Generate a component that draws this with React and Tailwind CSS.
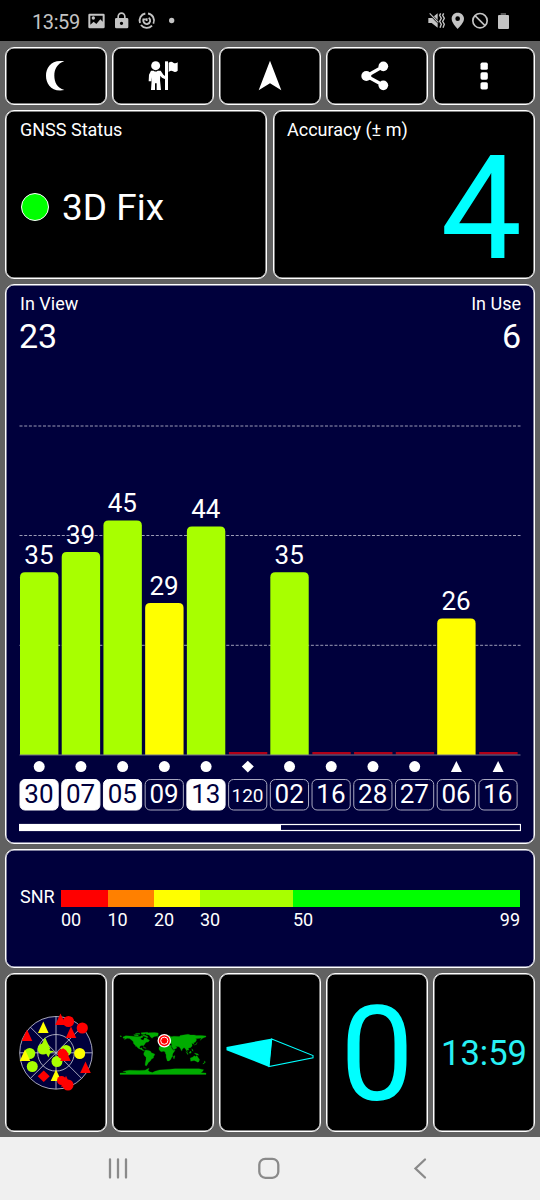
import React from "react";

const PANEL =
  "rounded-[9px] border border-white shadow-[inset_0_0_0_0.5px_#ffffff]";

const SATS = [
  { id: "30", snr: 35, top: 572.2, used: true, shape: "circle" },
  { id: "07", snr: 39, top: 552, used: true, shape: "circle" },
  { id: "05", snr: 45, top: 520.5, used: true, shape: "circle" },
  { id: "09", snr: 29, top: 603, used: false, shape: "circle" },
  { id: "13", snr: 44, top: 526.4, used: true, shape: "circle" },
  { id: "120", snr: 0, used: false, shape: "diamond" },
  { id: "02", snr: 35, top: 572.2, used: false, shape: "circle" },
  { id: "16", snr: 0, used: false, shape: "circle" },
  { id: "28", snr: 0, used: false, shape: "circle" },
  { id: "27", snr: 0, used: false, shape: "circle" },
  { id: "06", snr: 26, top: 618.6, used: false, shape: "triangle" },
  { id: "16", snr: 0, used: false, shape: "triangle" },
];

function StatusBar() {
  return (
    <header className="flex h-[41px] shrink-0 items-center justify-between bg-black pr-[29px] pl-[32px] text-[#c4c4c4]">
      <div className="flex items-center">
        <span className="w-[53px] pt-[2px] text-[20px] leading-none tracking-[-0.4px]">
          13:59
        </span>
        <svg className="h-5 w-[92px]" viewBox="255 32 276 60" fill="currentColor">
          <path
            fillRule="evenodd"
            d="M269 40h41q4 0 4 4v36q0 4-4 4h-41q-4 0-4-4V44q0-4 4-4zM271 46v27l10-9 8 7 12-14 7 7V46zM280 48a5 5 0 1 1 0 10a5 5 0 1 1 0-10z"
          />
          <path
            fillRule="evenodd"
            d="M349 53h3v-4a12.500 13 0 0 1 25 0v4h4q4 0 4 4v23q0 4-4 4h-32q-4 0-4-4V57q0-4 4-4zM357 53h15v-4a7.500 8 0 0 0-15 0zM364.500 64a5 5 0 1 0 0 10a5 5 0 1 0 0-10z"
          />
          <g fill="none" stroke="currentColor" strokeWidth="5.500">
            <path d="M444 39.500A21.500 21.500 0 0 1 460 70M456 76A21.500 21.500 0 0 1 423 74M420 68A21.500 21.500 0 0 1 436 39.500" />
            <path d="M431 56A10.500 10.500 0 0 0 442 71A10.500 10.500 0 0 0 446 52" />
            <path d="M428 57h9M440 54v8" />
          </g>
          <circle cx="515" cy="60.500" r="8" />
        </svg>
      </div>
      <svg className="h-5 w-[85px]" viewBox="468 32 255 60" fill="currentColor">
        <path d="M475 53h10l18-14v43l-18-14h-10z" />
        <path d="M476 37l29 29" stroke="#000" strokeWidth="7" />
        <path d="M479 39l26 27" stroke="currentColor" strokeWidth="3.500" />
        <path
          d="M512 39l-3 6 5 9-5 9 5 9-4 10M521 39l-3 6 5 9-5 9 5 9-4 10"
          fill="none"
          stroke="currentColor"
          strokeWidth="4"
        />
        <path
          fillRule="evenodd"
          d="M563 37c-11 0-18 8-18 18 0 12 12 23 18 31 6-8 19-19 19-31 0-10-8-18-19-18zM563 48a7 7 0 1 1 0 14a7 7 0 1 1 0-14z"
        />
        <g fill="none" stroke="currentColor" strokeWidth="5">
          <circle cx="630" cy="61" r="21.500" />
          <path d="M615 46l30 30" />
        </g>
        <path d="M692 38h16v6h-16z" fill="#555" />
        <rect x="684" y="44" width="33" height="42" rx="3" />
      </svg>
    </header>
  );
}

function ToolButton({ label, children }) {
  return (
    <button
      aria-label={label}
      className={`${PANEL} flex h-[58px] items-center justify-center bg-black text-white`}
    >
      <svg className="size-9" viewBox="0 0 108 108" fill="currentColor">
        {children}
      </svg>
    </button>
  );
}

function Toolbar() {
  return (
    <nav className="grid grid-cols-5 gap-[5px]">
      <ToolButton label="Night mode">
        <path d="M79 10C40 3 24 30 24 53C24 77 40 103 79 96C57 89 49 72 49 53C49 34 57 17 79 10z" />
      </ToolButton>
      <ToolButton label="Waypoint">
        <circle cx="32" cy="23" r="13.500" />
        <path d="M18 38h8q6 5 12 0h9l8 12 6 5v9l-10-5-5-6-1 13 3 30H35V76h-5v20H18L20 66l-1-8v12h-8L12 50z" />
        <path d="M60 10h9v86h-9z" />
        <path d="M71 14q8-6 14 0 6 4 13-1v25q-7 7-14 2-6-4-13 2z" />
      </ToolButton>
      <ToolButton label="Navigate">
        <path d="M54 8L88 97L54 76L20 97z" />
      </ToolButton>
      <ToolButton label="Share">
        <path
          d="M73 25L22 54L73 82"
          fill="none"
          stroke="currentColor"
          strokeWidth="10"
        />
        <circle cx="22" cy="54" r="15" />
        <circle cx="73" cy="25" r="14.500" />
        <circle cx="73" cy="82" r="14.500" />
      </ToolButton>
      <ToolButton label="Menu">
        <rect x="43.500" y="13.500" width="22" height="22" rx="5" />
        <rect x="43.500" y="43" width="22" height="22" rx="5" />
        <rect x="43.500" y="72.500" width="22" height="22" rx="5" />
      </ToolButton>
    </nav>
  );
}

function StatusPanels() {
  return (
    <section className="grid grid-cols-2 grid-rows-[169px] gap-[6px]">
      <div className={`${PANEL} bg-black px-[14px] pt-[10px]`}>
        <h2 className="text-[18px] leading-none">GNSS Status</h2>
        <div className="mt-[49px] flex items-center">
          <span className="ml-px size-7 rounded-full border-[1.5px] border-white bg-[#00ff00]" />
          <span className="ml-[13px] pt-px text-[37px] leading-none">3D Fix</span>
        </div>
      </div>
      <div className={`${PANEL} flex flex-col bg-black pr-[12px] pl-[13px] pt-[10px]`}>
        <h2 className="text-[18px] leading-none">Accuracy (± m)</h2>
        <span className="-mt-[3px] text-right text-[145px] leading-none text-[#00ffff]">
          4
        </span>
      </div>
    </section>
  );
}

function Marker({ shape, x }) {
  if (shape === "diamond")
    return <path d={`M${x} 760.700l6 5.900l-6 5.900l-6-5.900z`} fill="#fff" />;
  if (shape === "triangle")
    return <path d={`M${x} 761l5.500 11h-11z`} fill="#fff" />;
  return <circle cx={x} cy="766.600" r="5.500" fill="#fff" />;
}

function SnrChart() {
  return (
    <svg className="block h-[478px] w-[502px]" viewBox="19 356 502 478">
      {[426, 535.5, 645.3].map((y) => (
        <path
          key={y}
          d={`M19.500 ${y}H520.500`}
          stroke="#9c9cb6"
          strokeWidth="1"
          strokeDasharray="3 1.700"
        />
      ))}
      {SATS.map((s, i) => {
        const x = 20 + i * 41.72;
        const mid = x + 19.2;
        return (
          <g key={i}>
            {s.snr > 0 ? (
              <>
                <path
                  d={`M${x} 755V${s.top + 5}q0-5 5-5h28.400q5 0 5 5V755z`}
                  fill={s.snr >= 30 ? "#a8ff00" : "#ffff00"}
                />
                <text x={mid - 0.3} y={s.top - 8.4} fontSize="26" textAnchor="middle" fill="#fff">
                  {s.snr}
                </text>
              </>
            ) : (
              <rect x={x + 0.3} y="752" width="38.400" height="2.500" fill="#b00018" />
            )}
            <Marker shape={s.shape} x={mid} />
            <rect
              x={x}
              y="779.500"
              width="38.200"
              height="30.500"
              rx="5"
              fill={s.used ? "#fff" : "none"}
              stroke={s.used ? "#fff" : "#a8a8c0"}
              strokeWidth="1"
            />
            <text
              x={mid - 0.3}
              y={s.id.length > 2 ? 801.5 : 803}
              fontSize={s.id.length > 2 ? 19 : 26}
              textAnchor="middle"
              fill={s.used ? "#00003c" : "#fff"}
            >
              {s.id}
            </text>
          </g>
        );
      })}
      <path d="M19.500 755H520.500" stroke="#73738c" strokeWidth="1.200" />
      <rect x="19.500" y="824.500" width="501" height="6" fill="none" stroke="#fff" strokeWidth="1.200" />
      <rect x="19" y="824" width="262" height="7" fill="#fff" />
    </svg>
  );
}

function SatellitePanel() {
  return (
    <section className={`${PANEL} flex h-[560px] flex-col justify-between bg-[#00003c] px-[13px] pt-[10px] pb-[9px]`}>
      <div className="flex justify-between pl-px">
        <div className="flex flex-col">
          <span className="text-[18px] leading-none">In View</span>
          <span className="mt-[6px] -ml-px text-[34px] leading-none">23</span>
        </div>
        <div className="flex flex-col items-end">
          <span className="text-[18px] leading-none">In Use</span>
          <span className="mt-[6px] text-[34px] leading-none">6</span>
        </div>
      </div>
      <SnrChart />
    </section>
  );
}

function SnrLegend() {
  return (
    <section className={`${PANEL} flex h-[119px] bg-[#00003c] pr-[14px] pl-[14px] pt-[38px] text-[18px] leading-none`}>
      <span className="w-[41px]">SNR</span>
      <div className="flex-1">
        <div className="mt-[1.500px] flex h-[17.500px]">
          <div className="w-[46.500px] bg-[#ff0000]" />
          <div className="w-[46.500px] bg-[#ff8000]" />
          <div className="w-[46px] bg-[#ffff00]" />
          <div className="w-[93px] bg-[#a8ff00]" />
          <div className="flex-1 bg-[#00ff00]" />
        </div>
        <div className="mt-[4px] flex">
          <span className="w-[46.500px]">00</span>
          <span className="w-[46.500px]">10</span>
          <span className="w-[46px]">20</span>
          <span className="w-[93px]">30</span>
          <span className="flex-1">50</span>
          <span>99</span>
        </div>
      </div>
    </section>
  );
}

function SkyPlot() {
  const tri = (x, y, r = 5) => `M${x} ${y - r * 1.15}l${r} ${r * 2.2}h${-2 * r}z`;
  return (
    <svg className="h-[84px] w-[84px]" viewBox="14 1010.5 84 84">
      <circle cx="56" cy="1052.300" r="36.300" fill="#00003c" />
      <g fill="none" stroke="#b9b9c9" strokeWidth="0.900">
        <circle cx="56" cy="1052.300" r="36.300" />
        <circle cx="56" cy="1052.300" r="18.300" />
        <path d="M19.700 1052.300H92.300M56 1016V1088.600M30.300 1026.600L81.700 1078M30.300 1078L81.700 1026.600" />
      </g>
      <g fill="#a8ff00">
        <circle cx="29.700" cy="1053" r="5.500" />
        <circle cx="32.300" cy="1066" r="5.500" />
        <circle cx="43" cy="1048.500" r="5.500" />
        <circle cx="66" cy="1050" r="5.500" />
        <circle cx="57" cy="1061" r="5.500" />
        <path d={tri(45, 1043, 5.5)} />
        <path d={tri(46, 1047)} />
        <path d="M46 1050l8.500 0.500-4.500 2.500-1.500 4-3-5z" />
      </g>
      <g fill="#ffff00">
        <circle cx="79.700" cy="1053" r="5.500" />
        <path d={tri(43.300, 1027, 5.3)} />
        <path d={tri(25, 1055, 5.3)} />
        <path d={tri(56, 1075, 5.3)} />
      </g>
      <g fill="#ff0000">
        <circle cx="68.500" cy="1021" r="5.600" />
        <circle cx="82.300" cy="1027.500" r="5.600" />
        <circle cx="62.500" cy="1053.500" r="5" />
        <circle cx="61.500" cy="1080" r="4.500" />
        <circle cx="68" cy="1084.500" r="5.500" />
        <path d={tri(60.500, 1019, 5.3)} />
        <path d={tri(71, 1032, 5.3)} />
        <path d={tri(27, 1035, 5.3)} />
        <path d={tri(65.500, 1055, 5.3)} />
        <path d={tri(85.500, 1067, 5.3)} />
        <path d={tri(66, 1081)} />
        <path d="M63 1047.500l6 6-6 5-5-5z" />
        <path d="M43.700 1070l6 5.700-6 5.700-6-5.700z" />
      </g>
    </svg>
  );
}

const LAND =
  "M12 25L24 19L40 20L55 21L70 22L85 22L92 18L98 24L86 30L88 35L98 38L101 30L104 28L112 30L116 34L124 38L120 42L119 45L110 46L106 50L104 55L99 59L100 65L97 60L90 60L84 62L82 68L84 71L92 69L92 74L97 76L98 81L103 81L100 83L95 80L88 76L78 72L74 69L68 62L66 60L68 66L63 58L57 52L55 43L48 37L40 31L30 30L24 33L18 36L22 31L14 30z" +
  "M57 15L68 14L78 17L75 20L62 19zM64 10L82 9L84 13L70 13zM88 7L115 5L117 8L105 11L102 14L90 13zM93 16L106 17L116 22L118 26L112 28L106 23L98 20z" +
  "M107 11L120 7L145 6L160 8L160 16L157 20L145 22L138 26L135 30L130 27L126 22L122 16L110 14z" +
  "M103 82L108 78L120 80L128 84L130 89L137 92L145 95L145 99L141 104L140 112L132 116L127 124L122 128L118 131L116 137L112 142L111 145L105 142L106 130L109 118L109 108L103 103L99 96L100 90L103 86z" +
  "M163 69L163 75L166 80L172 86L183 84L189 87L190 93L193 98L193 108L198 124L205 124L212 118L216 110L220 105L220 98L222 92L231 79L223 79L216 70L213 60L205 58L200 59L191 57L190 53L178 55L171 58L167 63z" +
  "M171 53L175 54L180 50L184 46L190 46L196 52L198 49L194 45L200 47L203 53L207 49L216 53L216 58L215 62L223 75L225 77L238 70L236 65L230 60L237 64L247 65L253 72L257 82L260 80L260 76L268 68L274 74L278 80L283 89L280 80L285 77L289 80L286 70L295 69L302 62L301 52L298 50L305 53L309 55L309 51L308 48L315 46L321 36L316 32L335 30L340 28L336 39L342 32L352 27L359 25L360 20L340 18L320 18L310 16L295 16L285 13L265 16L252 18L248 22L225 21L213 23L208 18L195 22L185 28L187 32L191 31L196 30L200 36L190 36L182 40L176 42L179 46L171 47z" +
  "M175 40L174 32L178 32L181 38zM294 112L303 108L311 102L316 105L322 101L326 108L333 118L330 127L325 129L318 125L310 122L296 125zM275 85L286 95L283 97zM289 88L297 83L298 90L292 93zM311 91L325 94L330 100L318 98zM310 58L316 55L321 50L323 46L320 55zM353 124L358 128L350 136L346 136L353 130zM224 103L230 102L227 115L223 113zM157 23L166 23L163 27L158 27zM300 73L305 78L306 84L302 80zM96 67L106 69L110 71L104 71zM0 19L6 20L6 23L0 22z" +
  "M0 174L26 173L24 170L12 168L25 165L40 162L80 163L105 162L118 155L122 154L118 163L124 169L136 172L146 167L165 161L180 160L210 158L230 156L260 156L290 156L330 156L350 160L345 168L338 173L360 174L360 180L0 180z";

function WorldMap() {
  return (
    <svg className="h-[46px] w-[88px]" viewBox="119 1029.5 88 46">
      <g transform="translate(120 1030.600) scale(0.239 0.241)">
        <path d={LAND} fill="#00ac00" stroke="#00ac00" strokeWidth="1" />
      </g>
      <circle cx="164.300" cy="1040.200" r="6.800" fill="#fff" />
      <circle cx="164.300" cy="1040.200" r="5.500" fill="#ff0000" />
      <circle cx="164.300" cy="1040.200" r="3.600" fill="#ff0000" stroke="#fff" strokeWidth="1" />
    </svg>
  );
}

function Compass() {
  return (
    <svg className="h-[32px] w-[88px]" viewBox="226 1036.5 88 32">
      <path d="M226.500 1046.500L272 1038L269 1066.500L226.500 1049.700z" fill="#00ffff" />
      <path
        d="M271.700 1038.500L313 1055V1057.300L269 1066.100z"
        fill="none"
        stroke="#00ffff"
        strokeWidth="1.100"
      />
    </svg>
  );
}

function Tile({ children }) {
  return (
    <div className={`${PANEL} flex h-[159px] items-center justify-center overflow-hidden bg-black text-[#00ffff]`}>
      {children}
    </div>
  );
}

function Tiles() {
  return (
    <section className="grid grid-cols-5 gap-[5px]">
      <Tile>
        <SkyPlot />
      </Tile>
      <Tile>
        <WorldMap />
      </Tile>
      <Tile>
        <Compass />
      </Tile>
      <Tile>
        <span className="pt-[5px] text-[131px] leading-none">0</span>
      </Tile>
      <Tile>
        <span className="pt-[2px] text-[34.500px] leading-none text-[#28f0f4]">
          13:59
        </span>
      </Tile>
    </section>
  );
}

function NavBar() {
  return (
    <footer className="flex h-[63px] shrink-0 items-center justify-between bg-[#f0f0f0] pr-[108px] pb-[2px] pl-[106px] text-[#8a8a8a]">
      <svg className="size-6" viewBox="0 0 24 24" fill="none" stroke="currentColor" strokeWidth="2.300" strokeLinecap="round">
        <path d="M4 3.500v18M12 3.500v18M20 3.500v18" />
      </svg>
      <svg className="size-6" viewBox="0 0 24 24" fill="none" stroke="currentColor" strokeWidth="2.300">
        <rect x="2.300" y="2.800" width="19" height="19" rx="6" />
      </svg>
      <svg className="size-6" viewBox="0 0 24 24" fill="none" stroke="currentColor" strokeWidth="2.300" strokeLinecap="round">
        <path d="M17 3.500L7.500 12.500L17 21.500" />
      </svg>
    </footer>
  );
}

export default function App() {
  return (
    <div className="flex h-[1200px] w-[540px] flex-col overflow-hidden bg-[#616161] font-['Roboto',sans-serif] text-white">
      <StatusBar />
      <main className="flex flex-1 flex-col gap-[5px] px-[5px] pt-[6px]">
        <Toolbar />
        <StatusPanels />
        <SatellitePanel />
        <SnrLegend />
        <Tiles />
      </main>
      <NavBar />
    </div>
  );
}
